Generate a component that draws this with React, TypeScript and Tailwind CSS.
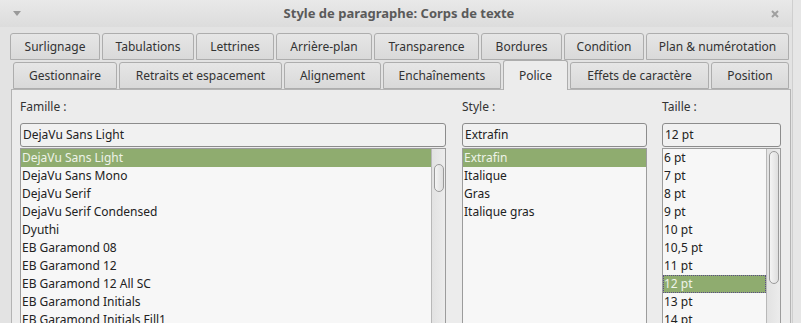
import React from 'react';

const row1 = [
  { label: 'Surlignage', w: 'w-[90px]' },
  { label: 'Tabulations', w: 'w-[92px]' },
  { label: 'Lettrines', w: 'w-[78px]' },
  { label: 'Arrière-plan', w: 'w-[96px]' },
  { label: 'Transparence', w: 'w-[105px]' },
  { label: 'Bordures', w: 'w-[81px]' },
  { label: 'Condition', w: 'w-[80px]' },
  { label: 'Plan & numérotation', w: 'w-[143px]' },
];

const row2 = [
  { label: 'Gestionnaire', w: 'w-[104px]' },
  { label: 'Retraits et espacement', w: 'w-[163px]' },
  { label: 'Alignement', w: 'w-[97px]' },
  { label: 'Enchaînements', w: 'w-[118px]' },
  { label: 'Police', w: 'w-[65px]', active: true },
  { label: 'Effets de caractère', w: 'w-[139px]' },
  { label: 'Position', w: 'w-[78px]' },
];

const families = [
  'DejaVu Sans Light',
  'DejaVu Sans Mono',
  'DejaVu Serif',
  'DejaVu Serif Condensed',
  'Dyuthi',
  'EB Garamond 08',
  'EB Garamond 12',
  'EB Garamond 12 All SC',
  'EB Garamond Initials',
  'EB Garamond Initials Fill1',
];

const styles = ['Extrafin', 'Italique', 'Gras', 'Italique gras'];

const sizes = ['6 pt', '7 pt', '8 pt', '9 pt', '10 pt', '10,5 pt', '11 pt', '12 pt', '13 pt', '14 pt'];

const Tab = ({ label, w, active }: { label: string; w: string; active?: boolean }) => (
  <div
    className={`${w} shrink-0 flex items-center justify-center border border-[#adadad] rounded-t-[3px] text-[12px] text-[#333] ${
      active
        ? 'h-[30px] -mb-px border-b-0 bg-[#ececec] relative z-10'
        : 'h-[27px] bg-gradient-to-b from-[#e6e6e6] to-[#d9d9d9]'
    }`}
  >
    {label}
  </div>
);

const Entry = ({ value }: { value: string }) => (
  <div className="h-[24px] border border-[#8c8c8c] rounded-[3px] bg-[#f1f1f1] flex items-center px-[2px] text-[12px] text-[#222]">
    {value}
  </div>
);

const ListRow = ({ text, selected, focus }: { text: string; selected?: boolean; focus?: boolean }) => (
  <div
    className={`h-[18px] leading-[18px] pl-[1px] whitespace-nowrap ${
      selected ? 'bg-[#8fac6f] text-[#eef3e8]' : 'text-[#222]'
    } ${focus ? 'outline outline-1 outline-dotted outline-[#5a4a8a] -outline-offset-1' : ''}`}
  >
    {text}
  </div>
);

const Scrollbar = ({ thumbTop, thumbH }: { thumbTop: string; thumbH: string }) => (
  <div className="w-[14px] shrink-0 border-l border-[#b8b8b8] bg-gradient-to-r from-[#e2e2e2] to-[#ececec] flex flex-col items-center">
    <div className={`${thumbTop} ${thumbH} w-[10px] rounded-[5px] border border-[#9a9a9a] bg-gradient-to-r from-[#f4f4f4] to-[#dedede]`} />
  </div>
);

export default function App() {
  return (
    <div
      className="w-[801px] h-[323px] overflow-hidden bg-[#e3e3e3] flex"
      style={{ fontFamily: '"Noto Sans", "Open Sans", sans-serif' }}
    >
      <div className="flex-1 flex flex-col">
        {/* title bar */}
        <div className="h-[27px] shrink-0 bg-gradient-to-b from-[#e9e9e9] to-[#dcdcdc] flex items-center relative">
          <svg className="ml-[13px]" width="8" height="5" viewBox="0 0 8 5">
            <path d="M0 0 L8 0 L4 5 Z" fill="#9a9a9a" />
          </svg>
          <div className="flex-1 text-center text-[13px] font-bold text-[#5a5a5a] pl-[6px]">
            Style de paragraphe: Corps de texte
          </div>
          <svg className="mr-[13px]" width="8" height="8" viewBox="0 0 8 8">
            <path d="M1 1 L7 7 M7 1 L1 7" stroke="#a0a0a0" strokeWidth="2" />
          </svg>
        </div>

        {/* tabs */}
        <div className="flex gap-[2px] pl-[10px] mt-[6px]">
          {row1.map((t) => (
            <Tab key={t.label} {...t} />
          ))}
        </div>
        <div className="flex items-end gap-[2px] pl-[13px] mt-px h-[28px]">
          {row2.map((t) => (
            <Tab key={t.label} {...t} />
          ))}
        </div>

        {/* panel */}
        <div className="ml-[11px] w-[780px] flex-1 border border-[#b4b4b4] border-b-0 bg-[#ececec] flex gap-[16px] px-[8px] pt-[8px] text-[12px] min-h-0">
          <div className="w-[426px] flex flex-col">
            <div className="text-[#333] h-[18px] leading-[18px]">Famille :</div>
            <div className="mt-[7px]">
              <Entry value="DejaVu Sans Light" />
            </div>
            <div className="mt-[1px] flex-1 border border-[#9c9c9c] border-b-0 bg-[#f7f7f7] flex min-h-0">
              <div className="flex-1 overflow-hidden">
                {families.map((f, i) => (
                  <ListRow key={f} text={f} selected={i === 0} />
                ))}
              </div>
              <Scrollbar thumbTop="mt-[15px]" thumbH="h-[28px]" />
            </div>
          </div>

          <div className="w-[185px] flex flex-col">
            <div className="text-[#333] h-[18px] leading-[18px]">Style :</div>
            <div className="mt-[7px]">
              <Entry value="Extrafin" />
            </div>
            <div className="mt-[1px] flex-1 border border-[#9c9c9c] border-b-0 bg-[#f7f7f7] overflow-hidden">
              {styles.map((s, i) => (
                <ListRow key={s} text={s} selected={i === 0} />
              ))}
            </div>
          </div>

          <div className="w-[119px] -ml-px flex flex-col">
            <div className="text-[#333] h-[18px] leading-[18px]">Taille :</div>
            <div className="mt-[7px]">
              <Entry value="12 pt" />
            </div>
            <div className="mt-[1px] flex-1 border border-[#9c9c9c] border-b-0 bg-[#f7f7f7] flex min-h-0">
              <div className="flex-1 overflow-hidden">
                {sizes.map((s) => (
                  <ListRow key={s} text={s} selected={s === '12 pt'} focus={s === '12 pt'} />
                ))}
              </div>
              <Scrollbar thumbTop="mt-[2px]" thumbH="h-[133px]" />
            </div>
          </div>
        </div>
      </div>
      {/* right window edge */}
      <div className="w-[9px] shrink-0 border-l border-[#cfcfcf] bg-[#e6e6e6]" />
    </div>
  );
}
